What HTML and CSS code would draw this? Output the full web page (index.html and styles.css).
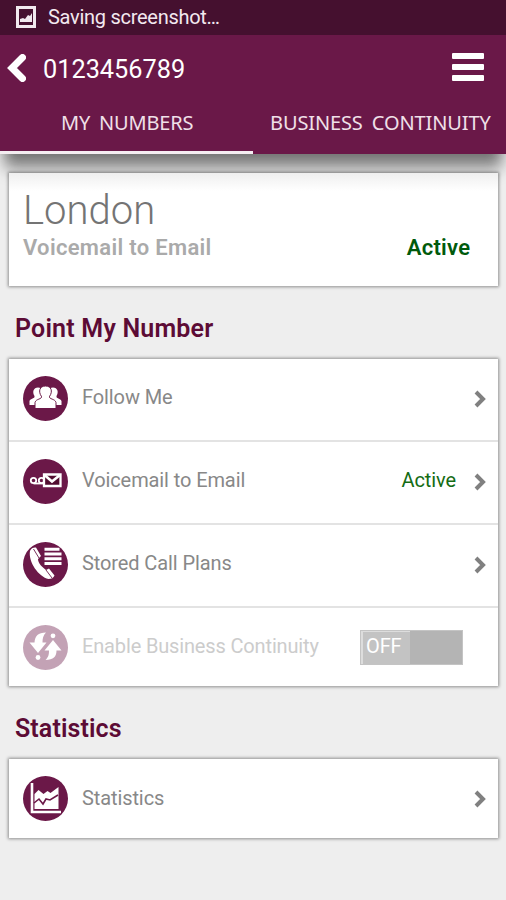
FILE: index.html
```html
<!DOCTYPE html>
<html lang="en">
<head>
<meta charset="utf-8">
<title>My Numbers</title>
<link rel="stylesheet" href="styles.css">
</head>
<body>
<header class="header">
  <div class="status">
    <svg class="status-icon" width="20" height="22" viewBox="0 0 20 22"><rect x="1.5" y="1.5" width="17" height="19" fill="none" stroke="#f1e9ee" stroke-width="3"/><path d="M4 16V13l3-1 2 1 3-4 2 1 2-3v9z" fill="#f1e9ee"/></svg>
    <span class="status-text">Saving screenshot…</span>
  </div>
  <div class="bar">
    <svg width="19" height="28" viewBox="0 0 19 28"><path d="M15.500 3.500 5 14l10.500 10.500" fill="none" stroke="#fff" stroke-width="7" stroke-linecap="round" stroke-linejoin="miter"/></svg>
    <span class="number">0123456789</span>
    <div class="menu"><i></i><i></i><i></i></div>
  </div>
  <nav class="tabs">
    <div class="tab active"><span class="tab-my">MY NUMBERS</span></div>
    <div class="tab"><span class="tab-bc">BUSINESS CONTINUITY</span></div>
  </nav>
</header>
<main>
  <section class="card summary">
    <h1><span>London</span></h1>
    <div class="summary-line"><span class="kind">Voicemail to Email</span><span class="state">Active</span></div>
  </section>
  <h2 class="h-point"><span>Point My Number</span></h2>
  <section class="card list">
    <div class="row">
      <svg class="icon" viewBox="0 0 45 45"><circle cx="22.500" cy="22.500" r="22.500"/><g class="w"><path d="M6.500 29v-4c1-3 5.500-2 5-5-2.500-4-1-8.500 3.500-8.500s5.500 4.500 3 8.500c0 3 3 2 4 5v4z"/><path d="M38.500 29v-4c-1-3-5.500-2-5-5 2.500-4 1-8.500-3.500-8.500s-5.500 4.500-3 8.500c0 3-3 2-4 5v4z"/><path class="cut" d="M12 32.500v-6c1-4 7-3 6.500-6-3.500-5-2-10.500 4-10.500s7.500 5.500 4 10.500c-.5 3 5.500 2 6.500 6v6z"/></g></svg>
      <span class="label l1">Follow Me</span>
      <svg class="chev" viewBox="0 0 12 18"><path d="m2 2 7 7-7 7"/></svg>
    </div>
    <div class="row">
      <svg class="icon" viewBox="0 0 45 45"><circle cx="22.500" cy="22.500" r="22.500"/><g fill="none" stroke="#fff" stroke-width="1.800"><circle cx="10.500" cy="21.500" r="2.700"/><path d="M10.500 24.500h10"/><circle cx="18.500" cy="21.500" r="2.700"/><path d="M21 15.500h16.500v11.500h-16.500z" fill="#520d30" stroke-width="2.300"/><path d="m21.500 16 7.500 6.500 8-6.500" stroke-width="2.600"/></g></svg>
      <span class="label l2">Voicemail to Email</span>
      <span class="row-state">Active</span>
      <svg class="chev" viewBox="0 0 12 18"><path d="m2 2 7 7-7 7"/></svg>
    </div>
    <div class="row">
      <svg class="icon" viewBox="0 0 45 45"><circle cx="22.500" cy="22.500" r="22.500"/><path class="w" d="M7 9c1-3 4-4 6-3.500l5 8.500-3 3c0 4 4 8 8 11l3-1.500 5.500 7c-1 2.500-3 3.500-6 3.500C16 35 5 20 7 9z"/><path d="m10.500 7 5.500 9M23 28l6 8" fill="none" stroke="#6b1848" stroke-width=".9"/><path d="M21.500 7.200h15M21.500 12h17M21.500 16.800h17M21.500 21.600h17" stroke="#fff" stroke-width="3"/></svg>
      <span class="label l3">Stored Call Plans</span>
      <svg class="chev" viewBox="0 0 12 18"><path d="m2 2 7 7-7 7"/></svg>
    </div>
    <div class="row disabled">
      <svg class="icon" viewBox="0 0 45 45"><circle cx="22.500" cy="22.500" r="22.500"/><g class="w"><path d="M6.500 17.500h5C12 11 15 7.500 23 7.500c-3 3-3.500 6-3.500 10h4L15 28z"/><circle cx="15" cy="32.500" r="2.400"/><path d="M38.500 25.500h-5c0 6-3 9.500-11 9.500 3-3 3.500-5.500 3.500-9.500h-4.500L30 15z"/><circle cx="30" cy="10.800" r="2.400"/></g></svg>
      <span class="label l4">Enable Business Continuity</span>
      <div class="switch"><span>OFF</span></div>
    </div>
  </section>
  <h2 class="h-stat"><span>Statistics</span></h2>
  <section class="card stats">
    <div class="row">
      <svg class="icon" viewBox="0 0 45 45"><circle cx="22.500" cy="22.500" r="22.500"/><path d="M9 7v29h29" fill="none" stroke="#fff" stroke-width="2.600"/><path class="w" d="M11.500 33V18l4-4 5 4 4-3 3 2 8-6v22z"/><path d="m11 27 5-4 4 5 3-5 4 1 8-5" fill="none" stroke="#6b1848" stroke-width="1.600"/></svg>
      <span class="label l5">Statistics</span>
      <svg class="chev" viewBox="0 0 12 18"><path d="m2 2 7 7-7 7"/></svg>
    </div>
  </section>
</main>
</body>
</html>
```

FILE: styles.css
```css
* { box-sizing: border-box; }
body { margin: 0; height: 900px; overflow: hidden; background: #eee; font-family: Roboto, "Liberation Sans", sans-serif; white-space: nowrap; }
.header { height: 154px; background: #6a1848; color: #fff; box-shadow: 0 22px 14px -5px rgba(0,0,0,.28), 0 12px 14px -5px rgba(0,0,0,.36); }
.status { height: 35px; background: #45102f; display: flex; align-items: center; padding: 0 0 2px 16px; font-size: 20px; letter-spacing: -.28px; color: #f3e9ef; }
.status-text { margin-left: 12px; }
.bar { height: 65px; display: flex; align-items: center; padding: 0 22px 0 7px; }
.number { margin-left: 17px; font-size: 25.300px; padding-top: 3px; }
.menu { margin-left: auto; display: flex; flex-direction: column; gap: 5px; padding-bottom: 2px; }
.menu i { width: 32px; height: 6px; border-radius: 1px; background: #fff; }
.tabs { display: grid; grid-template-columns: 1fr 1fr; height: 54px; }
.tab { font-family: "Noto Sans", sans-serif; font-size: 20px; line-height: 27px; padding-top: 9px; color: #f0e0e9; word-spacing: 4px; letter-spacing: -.12px; border-bottom: 3px solid #6a1848; }
.active { border-bottom-color: #f4edf1; padding-left: 61px; }
.tab-my { letter-spacing: -.2px; }
.tab-bc { padding-left: 17px; }
.card { position: relative; margin: 0 8px 0 9px; background: #fff; box-shadow: 0 0 3px 1px rgba(0,0,0,.4); }
.summary { margin-top: 19px; height: 113px; padding: 14px 28px 0 14px; background: linear-gradient(#efefef, #fff 18px); }
h1 { margin: 0; font-weight: 300; font-size: 40px; line-height: 48px; color: #747474; }
.summary-line { display: flex; justify-content: space-between; font-weight: 600; font-size: 22px; line-height: 26px; }
.kind { color: #aaa; letter-spacing: .32px; }
.state { color: #005a0c; letter-spacing: .25px; margin-right: -.25px; }
h2 { margin: 0; padding-left: 15px; font-size: 25px; line-height: 30px; font-weight: 600; letter-spacing: .2px; color: #5c0b35; }
.h-point { padding-top: 28px; height: 73px; }
.h-stat { padding-top: 28px; height: 73px; letter-spacing: .1px; }
.list { height: 327px; }
.row { height: 83px; display: flex; align-items: center; padding: 0 12px 2px 14px; border-bottom: 2px solid #e3e3e3; font-size: 20px; letter-spacing: -.1px; color: #888; }
.list .row:last-child { height: 78px; padding-bottom: 0; border: 0; padding-right: 35px; }
.stats { height: 79px; }
.stats .row { height: 79px; padding-bottom: 0; border: 0; }
.icon { width: 45px; height: 45px; fill: #6b1848; flex: none; }
.w { fill: #fff; }
.cut { stroke: #6b1848; stroke-width: 1px; }
.label { margin-left: 14px; padding-bottom: 3px; }
.l4 { letter-spacing: -.15px; }
.l5 { padding-bottom: 1px; }
.chev { width: 12px; height: 18px; margin-left: auto; fill: none; stroke: #808080; stroke-width: 4px; }
.row-state { margin-left: auto; padding-bottom: 3px; color: #146c14; letter-spacing: -.1px; }
.row-state + .chev { margin-left: 18px; }
.disabled .icon { opacity: .4; }
.disabled .label { color: #ccc; }
.switch { margin-left: auto; width: 103px; height: 35px; background: #b4b4b4; border: 1px solid #c4c4c4; }
.switch span { display: block; width: 49px; height: 33px; background: #c3c3c3; border-left: 2px solid #ddd; border-top: 1px solid #ddd; color: #fff; padding-left: 3px; line-height: 29px; }
```
